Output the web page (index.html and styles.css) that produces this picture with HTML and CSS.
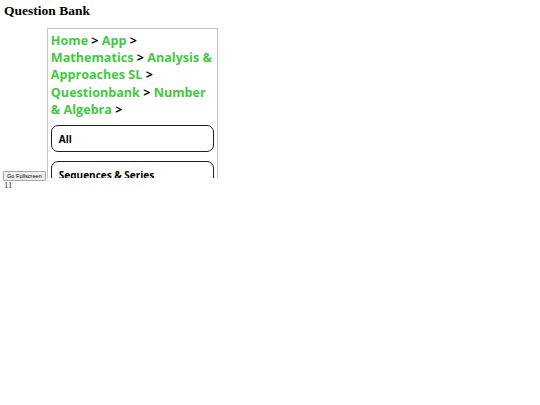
FILE: index.html
```html
<!DOCTYPE html>
<html>
<head>
<meta charset="utf-8">
<title>Question Bank</title>
<link rel="stylesheet" href="styles.css">
</head>
<body>
<h2 class="title">Question Bank</h2>
<div class="row"><button class="fs-btn">Go Fullscreen</button><div class="frame"><div class="crumbs"><a class="crumb">Home</a> <span class="sep">&gt;</span> <a class="crumb">App</a> <span class="sep">&gt;</span> <a class="crumb">Mathematics</a> <span class="sep">&gt;</span> <a class="crumb">Analysis &amp; Approaches SL</a> <span class="sep">&gt;</span> <a class="crumb">Questionbank</a> <span class="sep">&gt;</span> <a class="crumb">Number &amp; Algebra</a> <span class="sep">&gt;</span></div><div class="cards"><div class="card">All</div><div class="card">Sequences &amp; Series</div><div class="card">Exponents &amp; Logarithms</div></div></div></div>
<div class="count">11</div>
</body>
</html>
```
FILE: styles.css
```css
html, body {
  background: #ffffff;
}
body {
  margin: 0;
  padding: 3px 3px;
  font-family: "Liberation Serif", serif;
  color: #000;
}
.title {
  margin: 0 0 10px 1px;
  font-size: 13.5px;
  font-weight: bold;
  line-height: 15px;
}
.row {
  font-size: 9px;
  line-height: 10px;
}
.fs-btn {
  font-family: "Liberation Sans", Arial, sans-serif;
  font-size: 5.6px;
  line-height: 6px;
  padding: 1px 3px;
  margin: 0 1px 0 0;
  background: #efefef;
  border: 1px solid #a8a8a8;
  border-radius: 1px;
  color: #000;
  vertical-align: baseline;
}
.frame {
  display: inline-block;
  vertical-align: baseline;
  box-sizing: border-box;
  width: 171px;
  height: 150px;
  border: 1px solid #c4c4c4;
  border-bottom: none;
  overflow: hidden;
  padding: 3px 3px 0 3px;
  font-family: "Open Sans", sans-serif;
  font-weight: 700;
  background: #fff;
}
.crumbs {
  font-size: 12.6px;
  line-height: 17.2px;
  color: #000;
}
.crumb {
  color: #3fca3f;
}
.sep {
  color: #000;
}
.cards {
  display: flex;
  flex-direction: column;
  gap: 9px;
  margin-top: 7px;
}
.card {
  box-sizing: border-box;
  height: 27px;
  flex: none;
  border: 1px solid #1e1e1e;
  border-radius: 7px;
  padding: 0 7px;
  display: flex;
  align-items: center;
  font-size: 10px;
  color: #000;
}
.count {
  font-size: 8.5px;
  line-height: 9px;
  padding-left: 1px;
  color: #222;
}
```
